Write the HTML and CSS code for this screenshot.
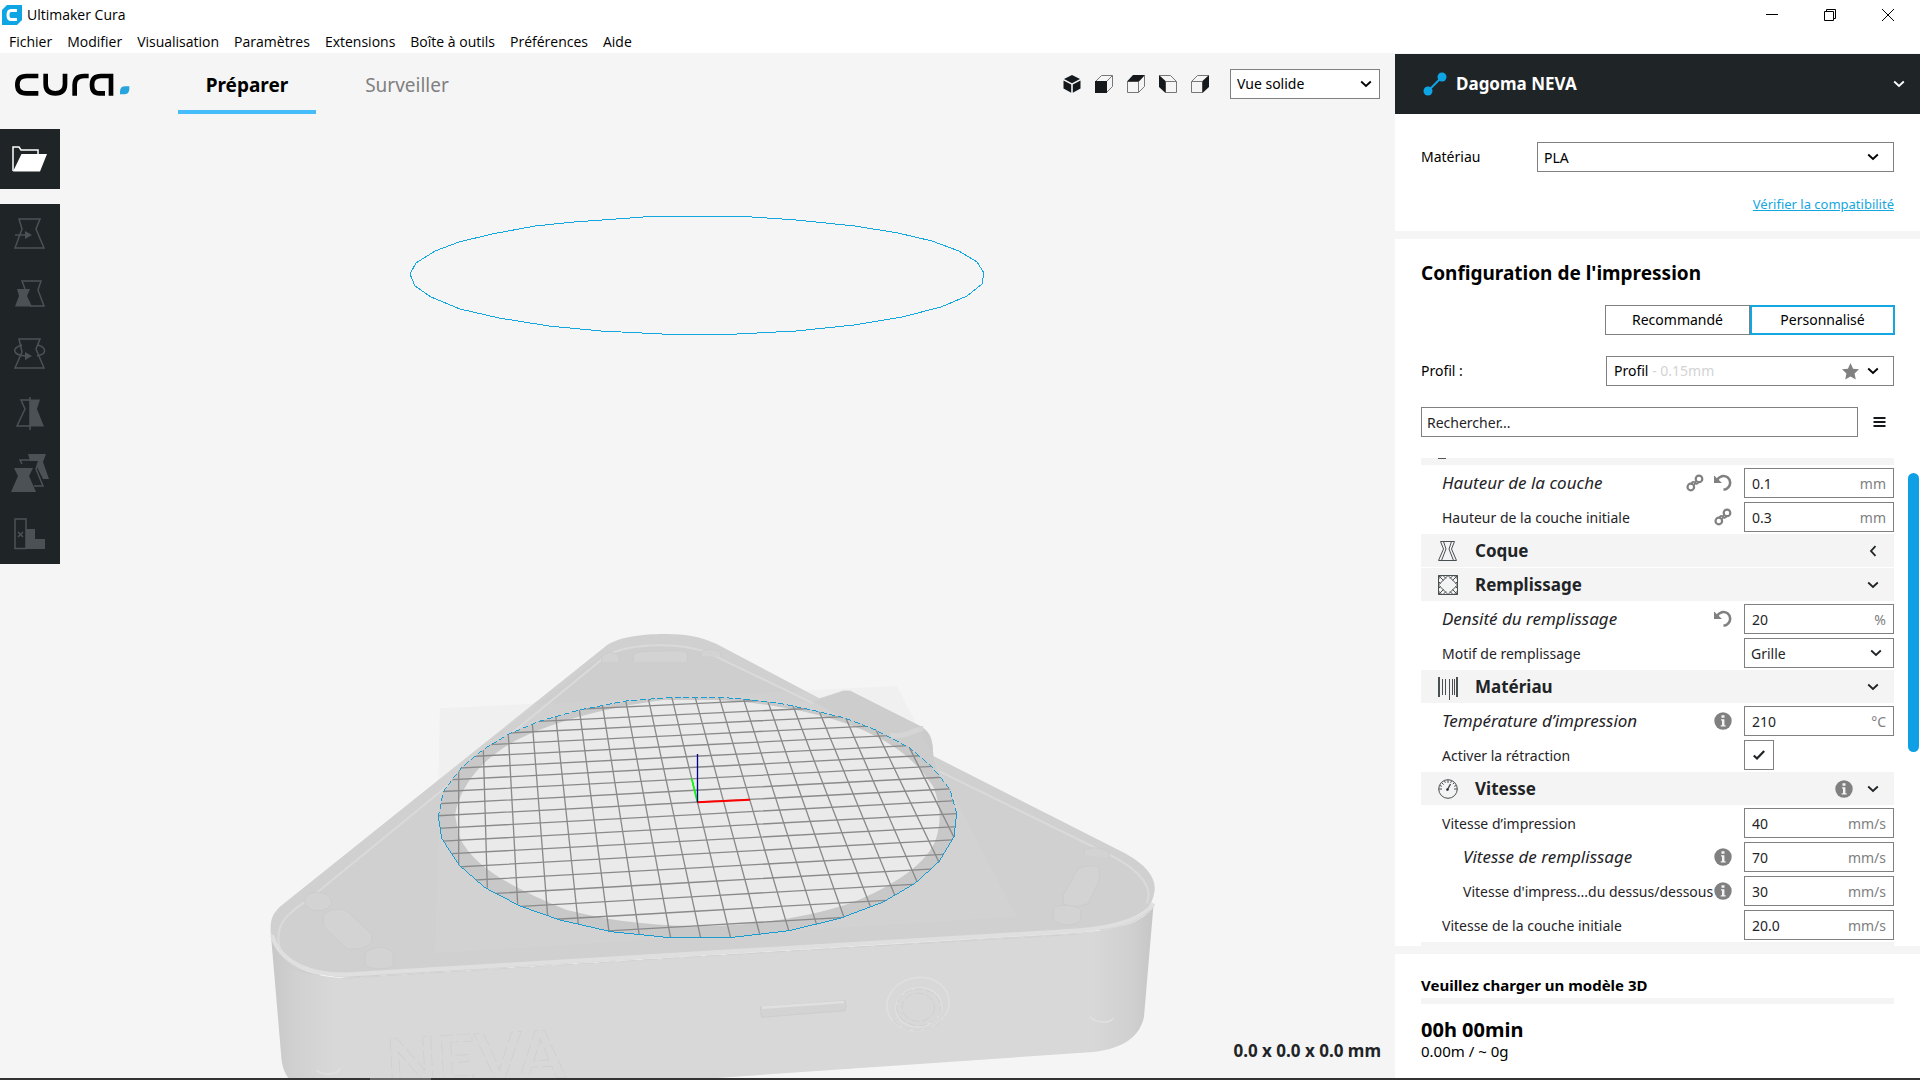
FILE: index.html
```html
<!DOCTYPE html>
<html lang="fr">
<head>
<meta charset="utf-8">
<meta name="viewport" content="width=device-width, initial-scale=1">
<title>Ultimaker Cura</title>
<link rel="stylesheet" href="styles.css">
</head>
<body>
<svg class="defs" width="0" height="0" aria-hidden="true">
  <symbol id="chevron" viewBox="0 0 12 12"><path d="M1.200 3.500L6 8l4.800-4.500" fill="none" stroke="currentColor" stroke-width="1.800"/></symbol>
  <symbol id="chevron-left" viewBox="0 0 12 12"><path d="M8.500 1.200L4 6l4.500 4.800" fill="none" stroke="currentColor" stroke-width="1.800"/></symbol>
  <symbol id="link" viewBox="0 0 18 18"><g fill="none" stroke="currentColor" stroke-width="2.200"><circle cx="4.800" cy="13" r="3.300"/><circle cx="13" cy="4.900" r="3.300"/><path d="M5.500 9.500c1-2 2.500-2 3.500-.5s2.500 1 3.500-.7" stroke-width="1.800"/><path d="M8 11.500L10.500 6" stroke-width="1.500"/></g></symbol>
  <symbol id="undo" viewBox="0 0 18 18"><path d="M2.500 6.500C5.500 2 10 .8 13.500 3.300c3.500 2.800 3.300 7.500.8 10-1.300 1.400-2.800 2.200-4.800 2.500" fill="none" stroke="currentColor" stroke-width="2.600"/><path d="M0 1.500V9h8z" fill="currentColor"/></symbol>
  <symbol id="info" viewBox="0 0 18 18"><circle cx="9" cy="9" r="8.700" fill="currentColor"/><path d="M7 7.200h3.400v6h1.300v1.300H6.700v-1.300H8V8.400H7zM7.500 3.300h3v2.400h-3z" fill="#f4f4f4"/></symbol>
  <symbol id="check" viewBox="0 0 12 12"><path d="M.8 6.500l3.200 3L11.200 2" fill="none" stroke="currentColor" stroke-width="2.200"/></symbol>
</svg>

<header class="window-top">
  <div class="title-bar">
    <svg class="app-icon" viewBox="0 0 20 20" aria-hidden="true"><path d="M5 0h15v15l-5 5H0V5z" fill="#0ea5e4"/><path d="M15 5.500H9C7 5.500 6 7 6 10s1 4.500 3 4.500h6" fill="none" stroke="#fff" stroke-width="3"/></svg>
    <span class="app-title">Ultimaker Cura</span>
    <div class="window-buttons">
      <button type="button" aria-label="Réduire"><svg viewBox="0 0 12 12"><path d="M0 5.500h12" stroke="#000"/></svg></button>
      <button type="button" aria-label="Restaurer"><svg viewBox="0 0 12 12"><path d="M.5 2.500h9v9h-9zM2.500 2.500v-2h9v9h-2" fill="none" stroke="#000"/></svg></button>
      <button type="button" aria-label="Fermer"><svg viewBox="0 0 12 12"><path d="M0 0l12 12M12 0L0 12" stroke="#000"/></svg></button>
    </div>
  </div>
  <nav class="menu-bar">
    <button type="button">Fichier</button><button type="button">Modifier</button><button type="button">Visualisation</button><button type="button">Paramètres</button><button type="button">Extensions</button><button type="button">Boîte à outils</button><button type="button">Préférences</button><button type="button">Aide</button>
  </nav>
</header>

<div class="workspace">
  <main class="viewport">
    <svg class="scene" viewBox="0 53 1395 1025" preserveAspectRatio="xMidYMax slice" aria-hidden="true">
      <defs>
        <linearGradient id="front" x1="65" x2="2710" y1="0" y2="0" gradientUnits="userSpaceOnUse">
          <stop offset="0" stop-color="#c8c8c8"/><stop offset=".025" stop-color="#d0d0d0"/><stop offset=".07" stop-color="#d8d8d8"/><stop offset=".93" stop-color="#d8d8d8"/><stop offset=".975" stop-color="#d0d0d0"/><stop offset="1" stop-color="#c6c6c6"/>
        </linearGradient>
        <clipPath id="bed"><path d="M565 589L575 655 627 735 705 803 810 858 930 900 1083 935 1250 952H1448L1617 932 1770 895 1900 846 1995 790 2067 725 2112 650 2120 580 2100 508 2045 440 1978 383 1877 330 1787 295 1707 275 1590 250 1480 237 1407 232H1265L1127 243 988 270 870 303 775 343 705 385 635 442 580 515z"/></clipPath>
      </defs>
      <polygon class="outline" points="410,274 416,263 435,251 459,242 492,234 535,226 574,222 630,218 656,216 737,216 767,218 796,220 855,226 898,233 932,241 959,251 977,262 984,273 982,284 967,296 941,307 902,317 854,325 796,331 737,334 662,334 601,331 549,326 499,318 460,309 431,297 415,286"/>
      <g transform="translate(250 620) scale(.33333)">
        <path d="M570 265L1940 198 2300 890 555 1000z" fill="#f0f0f0"/>
        <path d="M62 935C60 895 70 875 100 852L1065 80C1110 45 1200 42 1250 42C1310 42 1350 50 1400 72L1708 235 1780 212H1800L2010 318C2040 335 2048 355 2050 408L2625 700C2690 735 2718 775 2714 812C2700 915 2580 930 2480 934L300 1073C170 1070 75 1010 62 935z" fill="#d0d0d0"/>
        <path d="M62 935C75 1030 190 1078 300 1073L2480 938C2610 932 2700 900 2711 850L2682 1190C2670 1250 2620 1285 2530 1296L1400 1374H115C98 1350 95 1330 93 1300z" fill="url(#front)"/>
        <path d="M720 360L1060 105C1110 75 1330 50 1430 120L1690 245 1400 235 1100 240 860 300z" fill="#cecece"/>
        <path d="M1690 245L1780 212H1800L2010 318C2045 340 2048 360 2050 408L2060 450z" fill="#cbcbcb"/>
        <path d="M1920 345C1960 355 1990 330 2020 325" fill="none" stroke="#d3d3d3" stroke-width="16"/>
        <path d="M570 515V265L870 252 1940 198 2300 890 555 1000z" fill="#fff" opacity=".05"/>
        <g fill="none" stroke="#dadada" stroke-width="6">
          <path d="M90 985C65 900 140 865 180 835L1060 115C1110 75 1270 58 1380 100L1440 130 1690 250M2070 455L2580 705C2680 755 2710 810 2690 850"/>
        </g>
        <g fill="none" stroke="#dfdfdf" stroke-width="13"><path d="M66 945C90 1030 190 1070 300 1063L2480 932C2610 922 2690 890 2710 850"/></g>
        <path d="M280 1075L1350 1009 2480 943" fill="none" stroke="#cbcbcb" stroke-width="2" stroke-dasharray="50 14"/>
        <path d="M70 990C100 1040 150 1058 210 1065M2700 870C2670 900 2620 922 2550 930" fill="none" stroke="#c9c9c9" stroke-width="2"/>
        <g fill="#d3d3d3" stroke="#c8c8c8" stroke-width="2">
          <path d="M220 915V885C240 865 270 865 290 872L365 942V965C350 985 320 992 290 985L232 932z"/>
          <path d="M345 1035V1005C355 975 425 975 430 1005V1035C420 1050 360 1050 345 1035z"/>
          <path d="M165 850C160 825 180 815 205 817S245 830 245 850C230 880 180 880 165 850z"/>
          <path d="M1055 125V108C1070 95 1095 95 1107 108V125M1150 125V106C1160 95 1180 95 1200 94L1290 92C1305 92 1312 98 1312 106V125M1353 108V96C1370 86 1400 86 1412 98V110"/>
          <path d="M2440 825L2485 745C2510 735 2540 735 2548 745V780L2515 850C2490 862 2450 862 2440 850z"/>
          <path d="M2410 895V865C2425 852 2480 852 2492 870V900C2480 920 2420 920 2410 895z"/>
          <path d="M2502 705V690C2520 680 2560 680 2578 700V715"/>
          <path d="M1532 1160L1785 1142Q1792 1160 1785 1172L1535 1192Q1528 1175 1532 1160z"/>
        </g>
        <path d="M1536 1163L1782 1146" stroke="#e0e0e0" stroke-width="8"/>
        <g fill="none" stroke="#dfdfdf" stroke-width="5">
          <ellipse cx="2004" cy="1152" rx="94" ry="79" transform="rotate(-12 2004 1152)"/><ellipse cx="2006" cy="1162" rx="69" ry="58" transform="rotate(-12 2006 1162)"/>
          <path d="M200 1350C220 1368 260 1366 272 1345M2520 1190C2540 1212 2580 1210 2590 1195"/>
        </g>
        <g fill="none" stroke="#cacaca" stroke-width="2" stroke-dasharray="26 8">
          <ellipse cx="2006" cy="1162" rx="66" ry="55"/><ellipse cx="2005" cy="1162" rx="49" ry="42"/><path d="M1930 1200C1960 1245 2050 1240 2085 1190"/>
        </g>
        <text class="engraving" x="412" y="1400" transform="rotate(-3 412 1400)">NEVA</text>
        <g clip-path="url(#bed)">
          <path d="M550 220H2130V970H550z" fill="#c8c8c8"/>
          <path d="M615 585L628 650C670 740 780 800 950 870C1130 915 1280 920 1400 918C1550 912 1700 885 1800 850C1930 800 2040 725 2060 650C2075 600 2070 550 2050 500C2010 440 1960 390 1880 350C1780 295 1600 250 1400 240H1240C1060 262 900 310 800 360C690 420 630 500 615 585z" fill="#eaeaea"/>
          <g class="grid">
            <path d="M510 290L1350 250 2190 210M510 321L1350 281 2190 241M510 352L1350 311 2190 270M510 384L1350 343 2190 302M510 417L1350 375 2190 333M510 450L1350 408 2190 366M510 484L1350 441 2190 398M510 518L1350 475 2190 432M510 554L1350 510 2190 466M510 590L1350 546 2190 502M510 628L1350 583 2190 538M510 667L1350 622 2190 577M510 706L1350 661 2190 616M510 747L1350 701 2190 655M510 789L1350 743 2190 697M510 833L1350 786 2190 739M510 876L1350 829 2190 782M510 921L1350 873 2190 825M510 965L1350 917 2190 869"/>
            <path d="M626 450V735M700 390L712 803M775 343L803 853M847 310L893 887M917 288L985 912M988 268L1077 935M1057 253L1168 946M1127 240L1262 954M1195 236L1352 954M1265 230L1442 954M1335 230L1530 945M1407 230L1617 934M1480 235L1700 914M1553 243L1782 892M1628 255L1862 862M1707 272L1935 827M1787 293L2002 787M1877 328L2067 727M1977 380L2112 652"/>
          </g>
        </g>
        <path class="rim" d="M565 589L575 655 627 735 705 803 810 858 930 900 1083 935 1250 952H1448L1617 932 1770 895 1900 846 1995 790 2067 725 2112 650 2120 580"/>
        <path class="rim rim-back" d="M2120 580L2100 508 2045 440 1978 383 1877 330 1787 295 1707 275 1590 250 1480 237 1407 232H1265L1127 243 988 270 870 303 775 343 705 385 635 442 580 515 565 589"/>
        <g fill="none" stroke-width="4"><path d="M1325 475l17 70" stroke="#0f0" stroke-width="5"/><path d="M1342 547l158-8" stroke="#f00" stroke-width="6"/><path d="M1342.500 402v145" stroke="#000090" stroke-width="4"/></g>
      </g>
    </svg>

    <div class="top-bar">
      <svg class="logo" viewBox="45 215 345 75" role="img" aria-label="cura">
        <g fill="none" stroke="#000" stroke-width="14"><path d="M115 227H80C60 227 52 236 52 253S60 279 80 279h35"/><path d="M137 220v31C137 270 146 279 166 279S195 270 195 251v-31"/><path d="M224 286v-32C224 236 233 227 252 227h14"/><path d="M333 286v-59H303C285 227 276 236 276 253S284 279 298 279h17"/></g>
        <path d="M376 258h12v8q0 16-16 16h-12v-8q0-16 16-16z" fill="#25a4dd"/>
      </svg>
      <nav class="stages">
        <button type="button" class="stage stage-active">Préparer</button>
        <button type="button" class="stage">Surveiller</button>
      </nav>
      <div class="view-tools">
        <button type="button" aria-label="Vue 3D"><svg viewBox="0 0 18 18"><path d="M9 0l8 4-8 4.300L1 4zM.5 5.500l7.700 4v8.300L.5 13.600zM17.500 5.500l-7.700 4v8.300l7.700-4.200z" fill="#15191c"/></svg></button>
        <button type="button" aria-label="Vue de face"><svg viewBox="0 0 18 18"><path d="M.5 6.500L6.500.5h11v11l-6 6M11.500 6.500l6-6" class="cube"/><path d="M0 6h12v12H0z" fill="#15191c"/></svg></button>
        <button type="button" aria-label="Vue de dessus"><svg viewBox="0 0 18 18"><path d="M.5 6.500h11v11H.5zM17.500.5v11l-6 6" class="cube"/><path d="M0 6.500L6 0h12l-6 6.500z" fill="#15191c"/></svg></button>
        <button type="button" aria-label="Vue de gauche"><svg viewBox="0 0 18 18"><path d="M6.500 6.500h11v11h-11zM.5.500h11l6 6" class="cube"/><path d="M0 0l6.500 6v12L0 12z" fill="#15191c"/></svg></button>
        <button type="button" aria-label="Vue de droite"><svg viewBox="0 0 18 18"><path d="M.5 6.500h11v11H.5zM.5 6.500l6-6h11" class="cube"/><path d="M18 0v12l-6.500 6V6z" fill="#15191c"/></svg></button>
        <div class="select-box view-mode"><select aria-label="Vue"><option>Vue solide</option></select><svg class="chevron"><use href="#chevron"/></svg></div>
      </div>
    </div>

    <aside class="tools">
      <button type="button" class="tool tool-open" aria-label="Ouvrir"><svg viewBox="0 0 36 26"><path d="M1 25V1h6l2 3h17v4" fill="none" stroke="#fff" stroke-width="1.500"/><path d="M9.500 8H35l-7 17.500H1z" fill="#fff"/></svg></button>
      <div class="tool-group">
        <button type="button" class="tool" disabled aria-label="Déplacer"><svg viewBox="0 0 40 40"><path d="M9 5h21l-4 10 8 19H5l7-19z" class="line"/><path d="M5 21h11" class="line"/><path d="M15 17l7 4-7 4z" class="solid"/></svg></button>
        <button type="button" class="tool" disabled aria-label="Mettre à l'échelle"><svg viewBox="0 0 40 40"><path d="M15 15l-3-8h19l-3 9 6 16H20" class="line"/><path d="M7 15h13l-3 7 5 10.500H5L9 22z" class="solid"/></svg></button>
        <button type="button" class="tool" disabled aria-label="Pivoter"><svg viewBox="0 0 40 40"><path d="M9 5h21l-4 10 8 19H5l7-16z" class="line"/><path d="M12 11c-10 3-11 10 5 11M28 11c9 3 9 9-1 11" class="line"/><path d="M15 18l7 4-7 4z" class="solid"/></svg></button>
        <button type="button" class="tool" disabled aria-label="Miroir"><svg viewBox="0 0 40 40"><path d="M20 6h-9l4 9-8 17h13M20 3v33" class="line"/><path d="M20 5.500h10l-3 9.500 7 17.500H20z" class="solid"/></svg></button>
        <button type="button" class="tool" disabled aria-label="Paramètres par modèle"><svg viewBox="0 0 40 40"><path d="M12 10l-2-4h19l-3 9 7 17h-9" class="line"/><path d="M4 14h19l-4 8 7 16H1l7-16zM18 0h18l-3 8 6 17h-6l-6-12 2-6H20z" class="solid"/></svg></button>
        <button type="button" class="tool" disabled aria-label="Bloqueur de supports"><svg viewBox="0 0 40 40"><path d="M5 5h11v29.500H5zM8 18l5 5M13 18l-5 5" class="line"/><path d="M16 15h9v10h10v10H16z" class="solid"/></svg></button>
      </div>
    </aside>

    <output class="dimensions">0.0 x 0.0 x 0.0 mm</output>
  </main>

  <aside class="panel">
    <button type="button" class="machine">
      <svg class="machine-icon" viewBox="0 0 24 24"><path d="M5 19L19 5" stroke="#0ea5e4" stroke-width="2"/><circle cx="5" cy="19" r="4.500" fill="#0ea5e4"/><circle cx="19" cy="5" r="4.500" fill="#0ea5e4"/></svg>
      <span class="machine-name">Dagoma NEVA</span>
      <svg class="chevron"><use href="#chevron"/></svg>
    </button>

    <section class="card material">
      <div class="field">
        <label for="material">Matériau</label>
        <div class="select-box material-box"><select id="material"><option>PLA</option></select><svg class="chevron"><use href="#chevron"/></svg></div>
      </div>
      <a class="compat" href="#compatibilite">Vérifier la compatibilité</a>
    </section>

    <section class="card setup">
      <h2>Configuration de l'impression</h2>
      <div class="modes"><button type="button">Recommandé</button><button type="button" class="mode-active">Personnalisé</button></div>
      <div class="field profile">
        <span id="profile-label">Profil :</span>
        <button type="button" class="profile-box" aria-labelledby="profile-label"><span>Profil <span class="muted">- 0.15mm</span></span><svg class="star" viewBox="0 0 18 18"><path d="M9 0l2.700 6 6.300.7-4.700 4.300 1.300 6.500L9 14.200l-5.600 3.300L4.700 11 0 6.700 6.300 6z" fill="#808080"/></svg><svg class="chevron"><use href="#chevron"/></svg></button>
      </div>
      <div class="search">
        <input type="text" placeholder="Rechercher..." aria-label="Rechercher">
        <button type="button" aria-label="Visibilité des paramètres"><svg viewBox="0 0 12 10"><path d="M0 1h12M0 5h12M0 9h12" stroke="#15191c" stroke-width="2"/></svg></button>
      </div>

      <div class="settings-wrap">
        <div class="settings">
          <div class="category-tail"><i></i></div>
          <div class="row"><label for="s1" class="custom">Hauteur de la couche</label><svg><use href="#link"/></svg><svg><use href="#undo"/></svg><div class="value"><input id="s1" value="0.1"><span>mm</span></div></div>
          <div class="row"><label for="s2">Hauteur de la couche initiale</label><svg><use href="#link"/></svg><div class="value"><input id="s2" value="0.3"><span>mm</span></div></div>
          <button type="button" class="category"><svg class="cat-icon" viewBox="0 0 20 20"><path d="M2.500.5h14l-3 7.500 5 11.500H.5L5.500 8zM5.500.5L8 8 3.500 19.500M13.500.5L11 8l4.500 11.500"/></svg><span>Coque</span><svg class="chevron"><use href="#chevron-left"/></svg></button>
          <button type="button" class="category"><svg class="cat-icon" viewBox="0 0 20 20"><path d="M.5.5h19v19H.5zM.5 10L10 .5 19.500 10 10 19.500zM.5 4L4 .5M.5.5l5 5M16 .5L19.500 4M19.500.5l-5 5M.5 16L4 19.500M.5 19.500l5-5M19.500 16L16 19.500M19.500 19.500l-5-5M5 .5l3 3M15 .5l-3 3M5 19.500l3-3M15 19.500l-3-3M.5 6.500l2 2M19.500 6.500l-2 2M.5 13.500l2-2M19.500 13.500l-2-2"/></svg><span>Remplissage</span><svg class="chevron"><use href="#chevron"/></svg></button>
          <div class="row"><label for="s3" class="custom">Densité du remplissage</label><svg><use href="#undo"/></svg><div class="value"><input id="s3" value="20"><span>%</span></div></div>
          <div class="row"><label for="s4">Motif de remplissage</label><div class="select-box value-select"><select id="s4"><option>Grille</option></select><svg class="chevron"><use href="#chevron"/></svg></div></div>
          <button type="button" class="category"><svg class="cat-icon" viewBox="0 0 20 20"><path d="M1 0v20M19 0v20" stroke-width="2"/><path d="M4.500 2v16M7.500 2v16M11.500 2v21M14.500 2v16M16.500 2v16"/></svg><span>Matériau</span><svg class="chevron"><use href="#chevron"/></svg></button>
          <div class="row"><label for="s5" class="custom">Température d’impression</label><svg><use href="#info"/></svg><div class="value"><input id="s5" value="210"><span>°C</span></div></div>
          <div class="row"><label for="s6">Activer la rétraction</label><div class="check-cell"><input type="checkbox" id="s6" checked><svg class="tick"><use href="#check"/></svg></div></div>
          <button type="button" class="category"><svg class="cat-icon" viewBox="0 0 20 20"><circle cx="10" cy="10" r="9.300"/><path d="M10 1v3M1 10h3M19 10h-3M3.600 3.600l2 2M16.400 3.600l-1.500 1.500M6.500 1.800l.8 2M13.500 1.800l-.8 2M1.800 6.500l2 .8M18.200 6.500l-2 .8"/><path d="M9 11.500L12.500 5" stroke-width="1.500"/><circle cx="9.500" cy="10.500" r="1" fill="#1f2427"/></svg><span>Vitesse</span><svg class="cat-info"><use href="#info"/></svg><svg class="chevron"><use href="#chevron"/></svg></button>
          <div class="row"><label for="s7">Vitesse d’impression</label><div class="value"><input id="s7" value="40"><span>mm/s</span></div></div>
          <div class="row row-child"><label for="s8" class="custom">Vitesse de remplissage</label><svg><use href="#info"/></svg><div class="value"><input id="s8" value="70"><span>mm/s</span></div></div>
          <div class="row row-child"><label for="s9">Vitesse d'impress...du dessus/dessous</label><svg><use href="#info"/></svg><div class="value"><input id="s9" value="30"><span>mm/s</span></div></div>
          <div class="row"><label for="s10">Vitesse de la couche initiale</label><div class="value"><input id="s10" value="20.0"><span>mm/s</span></div></div>
          <div class="category-head"></div>
        </div>
        <div class="scroll-track"><div class="scroll-thumb"></div></div>
      </div>
    </section>

    <section class="card job">
      <p class="job-status">Veuillez charger un modèle 3D</p>
      <div class="job-progress"></div>
      <p class="job-time">00h 00min</p>
      <p class="job-amount">0.00m / ~ 0g</p>
    </section>
  </aside>
</div>
<div class="taskbar-edge"><div class="taskbar-item"></div></div>
</body>
</html>
```
FILE: styles.css
```css
* { box-sizing: border-box; }
body {
  margin: 0;
  height: 100vh;
  display: flex;
  flex-direction: column;
  overflow: hidden;
  background: #f5f5f5;
  color: #000;
  font: 14px/20px "Noto Sans", "Open Sans", sans-serif;
}
button, input, select { font: inherit; color: inherit; }
button { padding: 0; border: 0; background: none; }
svg { display: block; flex: none; }
p, h2 { margin: 0; }
.defs { position: absolute; }

.window-top { background: #fff; flex: none; font-family: "Open Sans", sans-serif; }
.title-bar { height: 29px; display: flex; align-items: center; padding: 0 26px 0 2px; }
.app-icon { width: 20px; height: 20px; }
.app-title { margin-left: 5px; flex: 1; }
.window-buttons { display: flex; gap: 46px; }
.window-buttons button, .window-buttons svg { display: block; width: 12px; height: 12px; }
.menu-bar { height: 24px; display: flex; align-items: center; gap: 15px; padding: 2px 9px 0; }

.workspace { flex: 1; min-height: 0; display: flex; }
.viewport { position: relative; flex: 1; min-width: 0; display: flex; flex-direction: column; overflow: hidden; }
.scene { position: absolute; inset: 0; width: 100%; height: 100%; }
.outline { fill: none; stroke: #14a6df; stroke-width: 1; shape-rendering: crispEdges; }
.rim { fill: none; stroke: #199ccf; stroke-width: 3; shape-rendering: crispEdges; }
.rim-back { stroke-dasharray: 18 8; }
.grid { fill: none; stroke: #8a8a8a; stroke-width: 4; }
.engraving { font: 700 200px Lato, sans-serif; fill: none; stroke: #cecece; stroke-width: 2; stroke-dasharray: 40 12; }

.top-bar { position: relative; height: 61px; display: flex; align-items: stretch; padding: 0 15px; }
.logo { width: 115px; height: 25px; margin-top: 19px; }
.stages { display: flex; gap: 22px; margin-left: 48px; flex: 1; }
.stage { width: 138px; border-bottom: 4px solid transparent; padding-top: 6px; font-size: 19px; line-height: 26px; color: #808080; }
.stage-active { border-color: #45bdfb; color: #000; font-weight: 700; }
.view-tools { display: flex; align-items: center; gap: 14px; }
.view-tools > button, .view-tools > button svg { display: block; width: 18px; height: 18px; }
.cube { fill: none; stroke: #777; stroke-width: 1; }
.view-mode { width: 150px; margin-left: 7px; }

.select-box { position: relative; height: 30px; flex: none; }
.select-box select { appearance: none; width: 100%; height: 100%; border: 1px solid #808080; border-radius: 0; background: #fff; padding: 1px 6px 0; }
.select-box .chevron { position: absolute; right: 8px; top: 9px; pointer-events: none; }
.chevron { width: 12px; height: 12px; }

.tools { position: relative; width: 60px; margin-top: 15px; display: flex; flex-direction: column; gap: 15px; }
.tool { width: 60px; height: 60px; display: flex; align-items: center; justify-content: center; background: #1f2427; }
.tool svg { width: 40px; height: 40px; }
.tool-open svg { width: 36px; height: 26px; }
.line { fill: none; stroke: #4c5155; stroke-width: 1.500px; }
.solid { fill: #4c5155; }
.dimensions { position: relative; margin: auto 14px 17px auto; font-size: 17px; font-weight: 700; color: #1f2427; }

.panel { width: 525px; flex: none; display: flex; flex-direction: column; padding-top: 1px; }
.machine { height: 60px; flex: none; display: flex; align-items: center; padding: 0 15px 0 28px; background: #1f2427; color: #fff; text-align: left; }
.machine-icon { width: 24px; height: 24px; }
.machine-name { flex: 1; margin-left: 9px; font-size: 17px; font-weight: 700; }
.card { background: #fff; padding: 0 26px; }
.material { height: 117px; padding-top: 28px; margin-bottom: 8px; flex: none; }
.field { display: flex; align-items: center; justify-content: space-between; }
.material-box { width: 357px; }
.material-box .chevron { right: 15px; }
.compat { display: block; margin-top: 22px; text-align: right; font-size: 13px; color: #14a6df; }

.setup { flex: 1; min-height: 0; display: flex; flex-direction: column; padding-top: 20px; padding-right: 0; margin-bottom: 8px; }
.setup h2 { font-size: 19px; line-height: 28px; }
.modes, .profile, .search { margin-right: 26px; flex: none; }
.modes { display: flex; justify-content: flex-end; margin-top: 18px; margin-right: 25px; }
.modes button { width: 145px; height: 30px; border: 1px solid #808080; }
.modes .mode-active { border: 2px solid #14a6df; }
.profile { margin-top: 21px; }
.profile-box { width: 288px; height: 30px; display: flex; align-items: center; gap: 8px; padding: 0 14px 0 7px; border: 1px solid #808080; text-align: left; }
.profile-box > span { flex: 1; }
.muted { color: #d3d3d3; }
.star { width: 17px; height: 17px; }
.search { margin-top: 21px; display: flex; align-items: center; }
.search input { flex: 1; height: 30px; border: 1px solid #808080; border-radius: 0; padding: 0 5px; }
.search input::placeholder { color: #1f2427; opacity: 1; }
.search button { margin: 0 8px 0 15px; }
.search svg { width: 13px; height: 10px; }

.settings-wrap { flex: 1; min-height: 0; display: flex; margin-top: 21px; color: #1f2427; }
.settings { flex: 1; overflow: hidden; }
.category-tail { height: 7px; margin-bottom: 1px; padding-left: 17px; background: #f4f4f4; }
.category-tail i { display: block; width: 8px; height: 1px; background: #555; }
.category { width: 100%; height: 33px; margin-bottom: 1px; display: flex; align-items: center; padding: 0 15px 0 17px; background: #f4f4f4; font-size: 17px; font-weight: 700; text-align: left; }
.category span { flex: 1; margin-left: 17px; }
.cat-icon { width: 20px; height: 20px; overflow: visible; fill: none; stroke: #4a4f52; stroke-width: 1; }
.cat-info { width: 18px; height: 18px; margin-right: 14px; color: #808080; }
.category-head { height: 33px; background: #f4f4f4; }
.row { height: 34px; display: flex; align-items: center; padding-left: 21px; }
.row-child { padding-left: 42px; }
.row label { flex: 1; padding-top: 1px; white-space: nowrap; }
.row .custom { padding-top: 0; font-size: 17px; font-style: italic; }
.row > svg { width: 18px; height: 18px; margin-right: 10px; color: #808080; }
.row > svg:has(+ .value) { margin-right: 12px; }
.value { width: 150px; height: 30px; display: flex; align-items: center; border: 1px solid #808080; padding: 1px 7px 0; flex: none; }
.value input { flex: 1; min-width: 0; border: 0; padding: 0; background: none; }
.value span { color: #808080; }
.value-select { width: 150px; }
.value-select .chevron { right: 12px; }
.check-cell { position: relative; width: 150px; height: 30px; flex: none; }
.check-cell input { appearance: none; display: block; margin: 0; width: 30px; height: 30px; border: 1px solid #808080; }
.tick { position: absolute; left: 9px; top: 9px; width: 12px; height: 12px; pointer-events: none; }
.scroll-track { width: 26px; padding: 15px 1px 0 14px; flex: none; }
.scroll-thumb { height: 279px; border-radius: 6px; background: #0e9fe4; }

.job { height: 124px; flex: none; padding-top: 19px; }
.job-status { padding-bottom: 1px; font-size: 15px; font-weight: 700; line-height: 24px; }
.job-progress { height: 6px; background: #f4f4f4; }
.job-time { margin-top: 13px; font-size: 20px; font-weight: 700; line-height: 26px; }
.job-amount { font-size: 15px; line-height: 16px; }

.taskbar-edge { height: 2px; flex: none; background: #333; padding-left: 370px; }
.taskbar-item { width: 61px; height: 2px; background: #666; }
```
